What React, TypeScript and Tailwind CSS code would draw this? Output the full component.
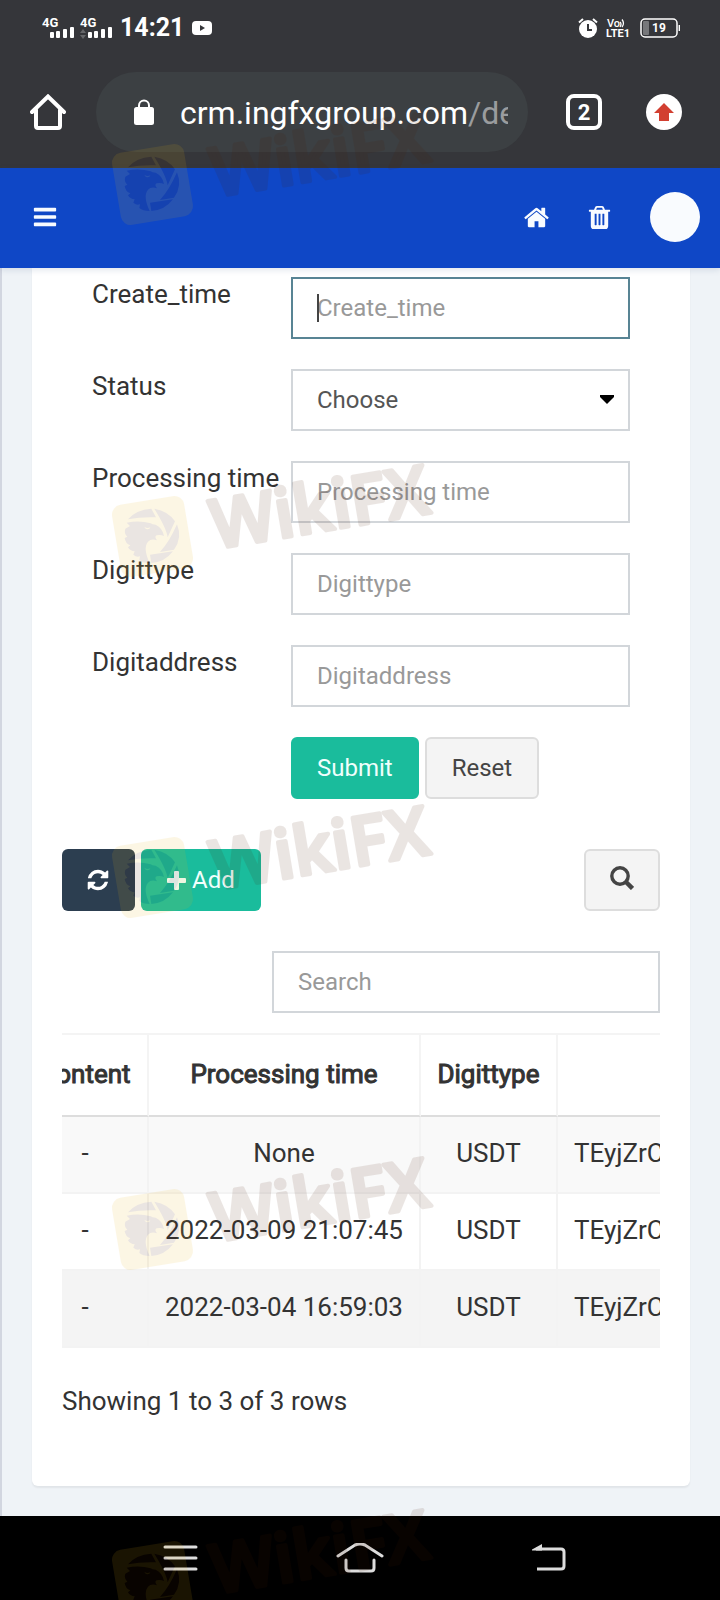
import { useEffect, useRef, type ReactNode } from "react";

const BARS =
  "M1664 1344v128q0 26-19 45t-45 19h-1408q-26 0-45-19t-19-45v-128q0-26 19-45t45-19h1408q26 0 45 19t19 45zm0-512v128q0 26-19 45t-45 19h-1408q-26 0-45-19t-19-45v-128q0-26 19-45t45-19h1408q26 0 45 19t19 45zm0-512v128q0 26-19 45t-45 19h-1408q-26 0-45-19t-19-45v-128q0-26 19-45t45-19h1408q26 0 45 19t19 45z";
const HOME =
  "M1472 992v480q0 26-19 45t-45 19h-384v-384h-256v384h-384q-26 0-45-19t-19-45v-480q0-1 .5-3t.5-3l575-474 575 474q1 2 1 6zm223-69l-62 74q-8 9-21 11h-3q-13 0-21-7l-692-577-692 577q-12 8-24 7-13-2-21-11l-62-74q-8-10-7-23.5t11-21.5l719-599q32-26 76-26t76 26l244 204v-195q0-14 9-23t23-9h192q14 0 23 9t9 23v408l219 182q10 8 11 21.5t-7 23.5z";
const TRASH =
  "M704 1376v-704q0-14-9-23t-23-9h-64q-14 0-23 9t-9 23v704q0 14 9 23t23 9h64q14 0 23-9t9-23zm256 0v-704q0-14-9-23t-23-9h-64q-14 0-23 9t-9 23v704q0 14 9 23t23 9h64q14 0 23-9t9-23zm256 0v-704q0-14-9-23t-23-9h-64q-14 0-23 9t-9 23v704q0 14 9 23t23 9h64q14 0 23-9t9-23zm-544-992h448l-48-117q-7-9-17-11h-317q-10 2-17 11zm928 32v64q0 14-9 23t-23 9h-96v948q0 83-47 143.5t-113 60.5h-832q-66 0-113-58.5t-47-141.5v-952h-96q-14 0-23-9t-9-23v-64q0-14 9-23t23-9h309l70-167q15-37 54-63t79-26h320q40 0 79 26t54 63l70 167h309q14 0 23 9t9 23z";
const REFRESH =
  "M1639 1056q0 5-1 7-64 268-268 434.5t-478 166.5q-146 0-282.5-55t-243.5-157l-129 129q-19 19-45 19t-45-19-19-45v-448q0-26 19-45t45-19h448q26 0 45 19t19 45-19 45l-137 137q71 66 161 102t187 36q134 0 250-65t186-179q11-17 53-117 8-23 30-23h192q13 0 22.5 9.5t9.5 22.5zm25-800v448q0 26-19 45t-45 19h-448q-26 0-45-19t-19-45 19-45l138-138q-148-137-349-137-134 0-250 65t-186 179q-11 17-53 117-8 23-30 23h-199q-13 0-22.5-9.5t-9.5-22.5v-7q65-268 270-434.5t480-166.5q146 0 284 55.5t245 156.5l130-129q19-19 45-19t45 19 19 45z";

const rows = [
  { content: "-", time: "None", type: "USDT", address: "TEyjZrC" },
  { content: "-", time: "2022-03-09 21:07:45", type: "USDT", address: "TEyjZrC" },
  { content: "-", time: "2022-03-04 16:59:03", type: "USDT", address: "TEyjZrC" },
];

const watermarkTops = [98, 450, 791, 1143, 1495];

function AwesomeIcon({ d, className }: { d: string; className?: string }) {
  return (
    <svg viewBox="0 0 1792 1792" fill="currentColor" className={className} aria-hidden="true">
      <path d={d} />
    </svg>
  );
}

function Signal({ arrows }: { arrows?: boolean }) {
  return (
    <svg viewBox="0 0 34 24" className="h-6 w-[34px]" fill="#fff" aria-hidden="true">
      <text x="0" y="11" fontSize="13" fontWeight="700" fontFamily="Roboto, sans-serif">
        4G
      </text>
      {arrows && <path d="M0 17l3-4 3 4zM0 19l3 4 3-4z" fill="#66676a" />}
      <rect x="8" y="16" width="4" height="6" rx="1" />
      <rect x="14" y="15" width="4" height="7" rx="1" />
      <rect x="21" y="13" width="4" height="9" rx="1" />
      <rect x="28" y="11" width="4" height="11" rx="1" />
    </svg>
  );
}

function StatusBar() {
  return (
    <div className="flex h-14 items-center pr-10 pl-[42px] text-white">
      <div className="flex flex-1 items-center">
        <Signal />
        <div className="ml-1">
          <Signal arrows />
        </div>
        <span className="ml-[6px] text-[25px] leading-7 font-bold">14:21</span>
        <svg viewBox="0 0 20 14" className="ml-2 h-[14px] w-5" aria-hidden="true">
          <rect width="20" height="14" rx="4" fill="#fff" />
          <path d="M8 4l5 3-5 3z" fill="#35363a" />
        </svg>
      </div>
      <svg viewBox="0 0 20 20" className="size-5" aria-hidden="true">
        <circle cx="10" cy="11" r="9" fill="#fff" />
        <path d="M1 4.500l4-3.500M19 4.500l-4-3.500" stroke="#fff" strokeWidth="2" />
        <path d="M10 6v6h4" fill="none" stroke="#35363a" strokeWidth="2" />
      </svg>
      <svg viewBox="0 0 24 20" className="ml-2 h-5 w-6" fill="#fff" fontFamily="Roboto, sans-serif" aria-hidden="true">
        <text x="1" y="9" fontSize="11" fontWeight="500">
          Vo
        </text>
        <path d="M14 4q2 2 0 5M16 1.500q3 4 0 7.500" fill="none" stroke="#fff" strokeWidth="1.300" />
        <text x="0" y="19" fontSize="11" fontWeight="700">
          LTE1
        </text>
      </svg>
      <svg viewBox="0 0 40 20" className="ml-[10px] h-5 w-10" aria-hidden="true">
        <rect x="1" y="1" width="36" height="18" rx="4" fill="none" stroke="#fff" strokeWidth="1.500" />
        <rect x="3" y="3" width="6" height="14" rx="1" fill="#77787b" />
        <path d="M39.300 7v6" stroke="#fff" strokeWidth="1.400" />
        <text x="19" y="14" fontSize="12" fontWeight="700" fill="#fff" textAnchor="middle" fontFamily="Roboto, sans-serif">
          19
        </text>
      </svg>
    </div>
  );
}

function BrowserBar() {
  return (
    <div className="flex h-28 items-center pr-[38px] pl-[30px] text-white">
      <button type="button" aria-label="Home">
        <svg viewBox="0 0 36 36" className="size-9" fill="none" stroke="#fff" strokeWidth="4" strokeLinecap="round" aria-hidden="true">
          <path d="M6 16v16q0 2 2 2h20q2 0 2-2V16" />
          <path d="M2 18L18 2.500L34 18" />
        </svg>
      </button>
      <div className="ml-[30px] flex h-20 min-w-0 flex-1 items-center rounded-full bg-[#3c4043] pr-5 pl-[38px]">
        <svg viewBox="0 0 20 26" className="h-[26px] w-5 shrink-0" aria-hidden="true">
          <path d="M5 10V6.500a5 5 0 0 1 10 0V10" fill="none" stroke="#fff" strokeWidth="2" />
          <rect y="8" width="20" height="18" rx="2.500" fill="#fff" />
        </svg>
        <div className="ml-[26px] flex-1 overflow-hidden pt-[2px] text-[32px] leading-10 whitespace-nowrap">
          crm.ingfxgroup.com<span className="text-[#9a9c9e]">/de</span>
        </div>
      </div>
      <button
        type="button"
        aria-label="Tabs"
        className="ml-[38px] flex size-9 items-center justify-center rounded-lg border-4 border-white text-[22px] font-bold"
      >
        2
      </button>
      <button type="button" aria-label="Update" className="ml-11">
        <svg viewBox="0 0 36 36" className="size-9" aria-hidden="true">
          <circle cx="18" cy="18" r="18" fill="#fff" />
          <path d="M18 9l10 10h-5v8H13v-8H8z" fill="#d23f31" />
        </svg>
      </button>
    </div>
  );
}

function SiteHeader() {
  return (
    <header className="relative z-10 flex h-[100px] items-center bg-[#0f47c6] pr-5 pb-[2px] pl-8 text-[#f8fbff] shadow-[0_2px_6px_rgba(60,90,130,0.15)]">
      <button type="button" aria-label="Toggle menu">
        <AwesomeIcon d={BARS} className="size-[26px]" />
      </button>
      <a href="#home" aria-label="Home" className="ml-auto">
        <AwesomeIcon d={HOME} className="size-[27px]" />
      </a>
      <button type="button" aria-label="Clear cache" className="ml-9">
        <AwesomeIcon d={TRASH} className="size-[27px]" />
      </button>
      <a href="#profile" aria-label="Profile" className="ml-[37px] size-[50px] rounded-full bg-[#f9fbfe]" />
    </header>
  );
}

const controlClass =
  "h-[62px] w-full border-2 border-[#d2d6da] bg-white px-6 text-2xl text-[#555] outline-none placeholder:text-[#999]";

function FormRow({ id, label, children }: { id: string; label: string; children: ReactNode }) {
  return (
    <div className="mb-[30px] flex">
      <label htmlFor={id} className="w-[199px] shrink-0 pt-[1px] text-[26px] leading-8 whitespace-nowrap">
        {label}
      </label>
      <div className="relative min-w-0 flex-1">{children}</div>
    </div>
  );
}

function SearchForm() {
  return (
    <form className="px-[30px]" onSubmit={(e) => e.preventDefault()}>
      <FormRow id="create_time" label="Create_time">
        <input
          id="create_time"
          placeholder="Create_time"
          className="h-[62px] w-full border-2 border-[#588494] bg-white px-6 text-2xl text-[#555] outline-none placeholder:text-[#999]"
        />
        {/* text caret */}
        <span className="pointer-events-none absolute top-[17px] left-[26px] h-7 w-[2px] bg-[#444]" />
      </FormRow>
      <FormRow id="status" label="Status">
        <select
          id="status"
          className="h-[62px] w-full appearance-none border-2 border-[#d2d6da] bg-white px-6 text-2xl text-[#555] outline-none"
        >
          <option>Choose</option>
        </select>
        <svg viewBox="0 0 14 9" className="pointer-events-none absolute top-[26px] right-4 h-[9px] w-[14px]" aria-hidden="true">
          <path d="M0 0h14v2L7 9L0 2z" />
        </svg>
      </FormRow>
      <FormRow id="processing_time" label="Processing time">
        <input id="processing_time" placeholder="Processing time" className={controlClass} />
      </FormRow>
      <FormRow id="digittype" label="Digittype">
        <input id="digittype" placeholder="Digittype" className={controlClass} />
      </FormRow>
      <FormRow id="digitaddress" label="Digitaddress">
        <input id="digitaddress" placeholder="Digitaddress" className={controlClass} />
      </FormRow>
      <div className="ml-[199px] flex gap-[6px] text-2xl">
        <button type="submit" className="h-[62px] rounded-md border-2 border-[#1abc9c] bg-[#1abc9c] px-6 text-[#f0fffc]">
          Submit
        </button>
        <button type="reset" className="h-[62px] rounded-md border-2 border-[#ddd] bg-[#f4f4f4] px-[25px] text-[#444]">
          Reset
        </button>
      </div>
    </form>
  );
}

function Toolbar() {
  return (
    <div className="mt-[50px] flex gap-[6px] text-2xl">
      <button
        type="button"
        aria-label="Refresh"
        className="flex h-[62px] w-[73px] items-center justify-center rounded-md bg-[#2c3e50] pr-[2px] text-white"
      >
        <AwesomeIcon d={REFRESH} className="size-6" />
      </button>
      <button type="button" className="flex h-[62px] items-center gap-[6px] rounded-md bg-[#1abc9c] px-[26px] text-[#f0fffc]">
        <svg viewBox="0 0 19 19" className="size-[19px]" fill="currentColor" aria-hidden="true">
          <path d="M7 1q0-1 1-1h3q1 0 1 1v6h6q1 0 1 1v3q0 1-1 1h-6v6q0 1-1 1H8q-1 0-1-1v-6H1q-1 0-1-1V8q0-1 1-1h6z" />
        </svg>
        Add
      </button>
      <button
        type="button"
        aria-label="Common search"
        className="ml-auto flex h-[62px] w-[76px] items-center justify-center rounded-md border-2 border-[#ddd] bg-[#f4f4f4] text-[#444]"
      >
        <svg viewBox="0 0 24 24" className="mb-1 size-6" fill="none" stroke="currentColor" aria-hidden="true">
          <circle cx="10" cy="10" r="8.200" strokeWidth="3.400" />
          <path d="M16 16l6.500 6.500" strokeWidth="4.500" />
        </svg>
      </button>
    </div>
  );
}

function RecordsTable() {
  const scroller = useRef<HTMLDivElement>(null);

  useEffect(() => {
    if (scroller.current) scroller.current.scrollLeft = 39;
  }, []);

  return (
    <div ref={scroller} className="mt-5 overflow-x-hidden border-t-2 border-[#f4f4f4]">
      <table className="w-[900px] table-fixed border-separate border-spacing-0 text-center text-[26px] leading-[37px] whitespace-nowrap">
        <colgroup>
          <col className="w-[126px]" />
          <col className="w-[272px]" />
          <col className="w-[137px]" />
          <col />
        </colgroup>
        <thead className="[-webkit-text-stroke:1px_#333]">
          <tr>
            <th className="h-[82px] border-r-2 border-b-2 border-r-[#f4f4f4] border-b-[#ddd] pb-[2px] font-normal">Content</th>
            <th className="border-r-2 border-b-2 border-r-[#f4f4f4] border-b-[#ddd] pb-[2px] font-normal">Processing time</th>
            <th className="border-r-2 border-b-2 border-r-[#f4f4f4] border-b-[#ddd] pb-[2px] font-normal">Digittype</th>
            <th className="border-b-2 border-[#ddd]" />
          </tr>
        </thead>
        <tbody>
          {rows.map((row, i) => (
            <tr key={i} className="first:bg-[#f9f9f9] last:bg-[#f4f4f4]">
              <td className="h-[77px] border-r-2 border-b-2 border-[#f3f3f3] pb-[2px]">{row.content}</td>
              <td className="border-r-2 border-b-2 border-[#f3f3f3] pb-[2px]">{row.time}</td>
              <td className="border-r-2 border-b-2 border-[#f3f3f3] pb-[2px]">{row.type}</td>
              <td className="border-b-2 border-[#f3f3f3] pb-[2px] pl-4 text-left">{row.address}</td>
            </tr>
          ))}
        </tbody>
      </table>
    </div>
  );
}

function NavBar() {
  return (
    <nav className="mt-auto flex h-[84px] items-center justify-center gap-[124px] bg-black text-[#ddd]">
      <button type="button" aria-label="Recent apps">
        <svg viewBox="0 0 56 30" className="h-[30px] w-14" stroke="currentColor" strokeWidth="3" strokeLinecap="round" aria-hidden="true">
          <path d="M13 4h31M13 15h31M13 26h31" />
        </svg>
      </button>
      <button type="button" aria-label="Home screen">
        <svg viewBox="0 0 56 30" className="h-[30px] w-14" fill="none" stroke="currentColor" strokeWidth="3" strokeLinecap="round" aria-hidden="true">
          <path d="M6 13L23 2Q28 0 33 2L50 13M14 17v8q0 3 3 3h22q3 0 3-3v-8" />
        </svg>
      </button>
      <button type="button" aria-label="Back">
        <svg viewBox="0 0 56 30" className="h-[30px] w-14" fill="none" stroke="currentColor" strokeWidth="3" aria-hidden="true">
          <path d="M24 6h25q3 0 3 3v14q0 3-3 3H25" />
          <path d="M20 6.500L30 1v6.500H20z" fill="currentColor" stroke="none" />
        </svg>
      </button>
    </nav>
  );
}

function Watermark({ top }: { top: number }) {
  return (
    <svg viewBox="0 0 360 140" className="absolute left-[100px] h-[140px] w-[360px]" style={{ top }} aria-hidden="true">
      <g opacity="0.108">
        <rect x="16" y="50" width="73" height="73" rx="10" fill="#ebb414" transform="rotate(-9.500 52.500 86.500)" />
        <g fill="#4b1c05" transform="translate(8 42) scale(0.3333)">
          <path d="M60 82Q84 53 130 50L144 76Q100 74 60 82Z" />
          <path d="M139 50Q182 58 201 88L179 136Q176 110 139 50Z" />
          <path d="M207 97Q224 138 198 173L156 180Q184 150 207 97Z" />
          <path d="M126 188L195 178Q170 211 130 213Z" />
          <path d="M56 92Q94 84 128 94Q132 98 143 98Q164 108 168 132Q158 128 146 130Q138 134 147 145Q130 139 120 149Q104 168 125 213Q104 213 94 204L96 193Q86 197 76 188L80 178Q66 177 60 166L67 160Q52 154 50 138L58 134Q47 124 52 110L66 102Z" />
          <path d="M109 104q8 7 18 2q-2 7-10 6q-6-2-8-8z" fill="#ebb414" />
        </g>
        <text
          x="115"
          y="99"
          transform="rotate(-9.500 115 99)"
          fontSize="68"
          fontWeight="600"
          fontFamily="'Open Sans', sans-serif"
          fill="#4b1c05"
          stroke="#4b1c05"
          strokeWidth="4"
          strokeLinejoin="round"
        >
          WikiFX
        </text>
      </g>
    </svg>
  );
}

export default function App() {
  return (
    <div className="relative flex min-h-screen flex-col overflow-hidden bg-[#eff3f7] font-[Roboto,sans-serif] text-[#333]">
      <div className="bg-[#35363a]">
        <StatusBar />
        <BrowserBar />
      </div>
      <SiteHeader />

      <main className="flex-1 border-l-2 border-[#d2d6e0] pr-[30px] pb-[30px] pl-[30px]">
        <section className="rounded-b-md bg-white px-[30px] pt-[9px] pb-[66px] shadow-[0_2px_2px_rgba(0,0,0,0.06)]">
          <SearchForm />
          <Toolbar />
          <input type="search" aria-label="Search" placeholder="Search" className={`${controlClass} mt-10 ml-auto block max-w-[388px]`} />
          <RecordsTable />
          <p className="mt-[35px] text-[26px] leading-[37px]">Showing 1 to 3 of 3 rows</p>
        </section>
      </main>

      <NavBar />

      <div className="pointer-events-none absolute inset-0 z-20">
        {watermarkTops.map((top) => (
          <Watermark key={top} top={top} />
        ))}
      </div>
    </div>
  );
}
